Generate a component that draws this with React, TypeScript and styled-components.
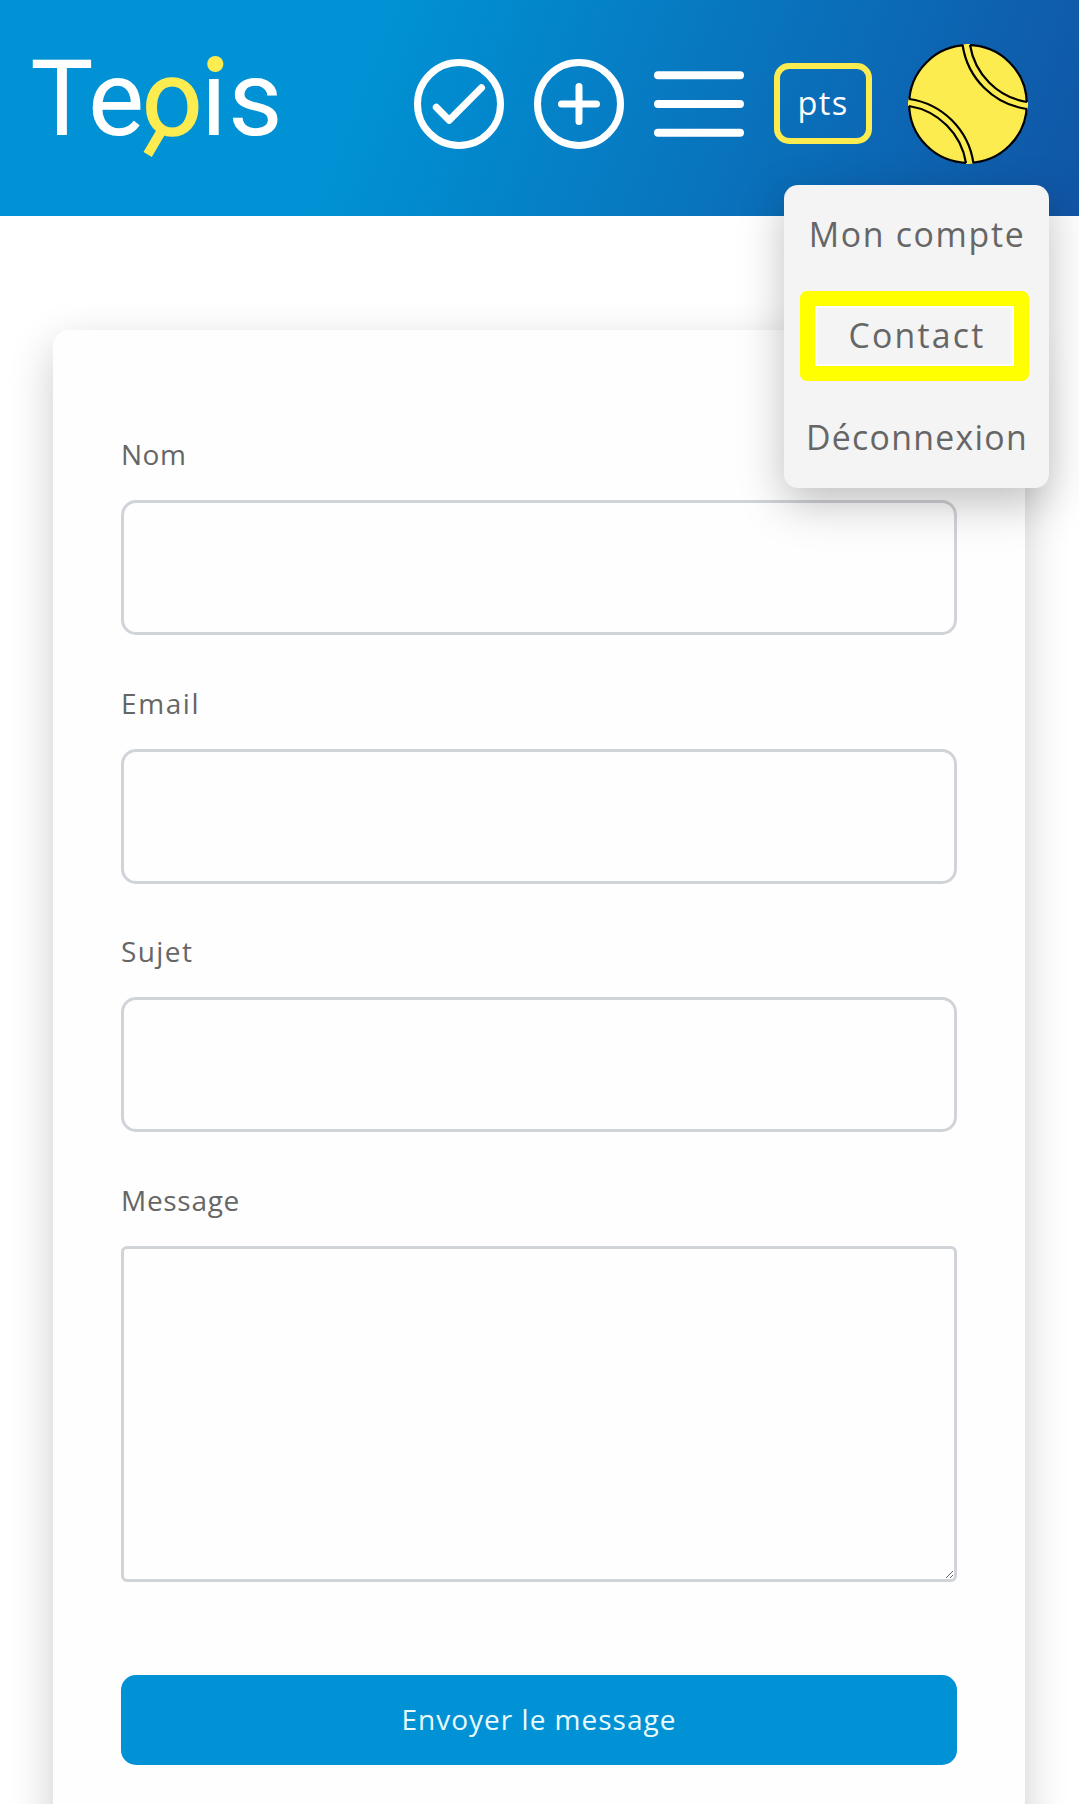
import React from "react";
import styled, { createGlobalStyle } from "styled-components";

const GlobalStyle = createGlobalStyle`
  * { box-sizing: border-box; }
  html, body { margin: 0; padding: 0; background: #fff; overflow: hidden; }
  body { height: 1804px; font-family: "Open Sans", "Noto Sans", sans-serif; color: #666; }
`;

const Page = styled.div`
  height: 1804px;
  overflow: hidden;
`;

const Header = styled.header`
  position: relative;
  height: 216px;
  display: flex;
  align-items: center;
  justify-content: space-between;
  padding: 0 51px 8px 0;
  background: linear-gradient(111deg, #0092d4 0%, #0092d4 34%, #1155a6 100%);
`;

const Logo = styled.svg`
  display: block;
  width: 320px;
  height: 208px;
  font-family: Roboto, sans-serif;
  font-size: 106px;
`;

const Nav = styled.nav`
  display: flex;
  align-items: center;
`;

const IconButton = styled.button`
  display: block;
  width: 90px;
  height: 90px;
  margin: 0 30px 0 0;
  padding: 0;
  border: 0;
  background: none;
  svg { display: block; overflow: visible; }
`;

const Points = styled.div`
  display: flex;
  align-items: center;
  justify-content: center;
  width: 98px;
  height: 81px;
  margin: 0 36px 1px 0;
  padding: 0 0 3px 0;
  border: 6px solid #fcec50;
  border-radius: 15px;
  color: #fff;
  font-size: 32.5px;
  letter-spacing: 1.4px;
`;

const Avatar = styled.svg`
  display: block;
  width: 120px;
  height: 120px;
`;

const Menu = styled.div`
  position: absolute;
  z-index: 2;
  top: 185px;
  right: 30px;
  width: 265px;
  height: 303px;
  display: flex;
  flex-direction: column;
  align-items: center;
  justify-content: space-between;
  padding: 4px 0 6px;
  border-radius: 14px;
  background: #f4f4f4;
  box-shadow: 0 15px 45px rgba(0, 0, 0, 0.25);
`;

const MenuItem = styled.a<{ $spacing: number; $active?: boolean }>`
  display: flex;
  align-items: center;
  justify-content: center;
  width: 229px;
  height: 90px;
  margin-right: ${(p) => (p.$active ? "4px" : "0")};
  padding: ${(p) => (p.$active ? "0 0 2px 5px" : "0 0 1px 1px")};
  border: ${(p) => (p.$active ? "15px solid #ff0" : "0")};
  border-radius: 7px;
  white-space: nowrap;
  font-size: 33.8px;
  letter-spacing: ${(p) => p.$spacing}px;
  box-shadow: ${(p) => (p.$active ? "inset 0 0 0 2px #fcfcfc" : "none")};
`;

const Card = styled.form`
  width: 972px;
  height: 1560px;
  margin: 114px 0 0 53px;
  padding: 103px 68px 0;
  display: flex;
  flex-direction: column;
  border-radius: 16px;
  background: #fefefe;
  box-shadow: 0 15px 45px rgba(0, 0, 0, 0.2);
`;

const Field = styled.div`
  flex: none;
  display: flex;
  flex-direction: column;
  margin-bottom: 46.5px;
`;

const Label = styled.label<{ $spacing: number }>`
  flex: none;
  height: 67px;
  padding: 3px 0 0 0;
  font-size: 28px;
  line-height: 37px;
  letter-spacing: ${(p) => p.$spacing}px;
`;

const Input = styled.input`
  width: 100%;
  height: 135px;
  margin: 0;
  border: 3px solid #d0d3d7;
  border-radius: 15px;
  background: transparent;
`;

const TextArea = styled.textarea`
  flex: none;
  display: block;
  width: 100%;
  height: 336px;
  margin: 0;
  border: 3px solid #d0d3d7;
  border-radius: 6px;
  background: transparent;
  resize: both;
`;

const Submit = styled.button`
  flex: none;
  height: 90px;
  margin: 47px 0 0;
  padding: 0 0 2px;
  border: 0;
  border-radius: 15px;
  background: #0092d4;
  color: #e8fbff;
  font-family: inherit;
  font-size: 28px;
  letter-spacing: 1px;
`;

const fields = [
  { id: "nom", label: "Nom", spacing: 0.5 },
  { id: "email", label: "Email", spacing: 1.6 },
  { id: "sujet", label: "Sujet", spacing: 1.4 },
];

export default function App() {
  return (
    <Page>
      <GlobalStyle />
      <Header>
        <Logo viewBox="0 0 320 208" fill="#fff">
          <text y="134.7" x="30.3 88">Te</text>
          <text y="134.7" x="142" fill="#fcec50" stroke="#fcec50" strokeWidth="1.3">o</text>
          <path d="M157 129L165 134.5L151.8 157L143.5 152Z" fill="#fcec50" />
          <text y="134.7" x="201 228">ıs</text>
          <circle cx="215.3" cy="64" r="8.1" fill="#fcec50" />
        </Logo>
        <Nav>
          <IconButton type="button" aria-label="Valider">
            <svg width="90" height="90" fill="none" stroke="#fff" strokeWidth="7">
              <circle cx="45" cy="45" r="41.5" />
              <path d="M22.3 48.3L35.2 61.2L67.5 28.7" strokeLinecap="round" strokeLinejoin="round" />
            </svg>
          </IconButton>
          <IconButton type="button" aria-label="Ajouter">
            <svg width="90" height="90" fill="none" stroke="#fff" strokeWidth="7">
              <circle cx="45" cy="45" r="41.5" />
              <path d="M27.5 45H62.5M45 27.5V62.5" strokeLinecap="round" />
            </svg>
          </IconButton>
          <IconButton type="button" aria-label="Menu">
            <svg width="90" height="90" fill="none" stroke="#fff" strokeWidth="8" strokeLinecap="round">
              <path d="M4 16.2H86M4 45H86M4 73.8H86" />
            </svg>
          </IconButton>
          <Points>pts</Points>
          <Avatar viewBox="0 0 120 120" fill="none">
            <circle cx="60" cy="60" r="58.8" fill="#fcec50" stroke="#000" strokeWidth="2.2" />
            <path d="M58.3 0A72.5 72.5 0 0 0 120 61.7" stroke="#fcec50" strokeWidth="7" />
            <path d="M54.6 1A75.6 75.6 0 0 0 119 65M62 1A69 69 0 0 0 119 58" stroke="#000" strokeWidth="2.2" />
            <path d="M0 58.3A72.5 72.5 0 0 1 61.7 120" stroke="#fcec50" strokeWidth="7" />
            <path d="M1 55A75.6 75.6 0 0 1 65.4 119M1 62A69 69 0 0 1 58 119" stroke="#000" strokeWidth="2.2" />
          </Avatar>
        </Nav>
        <Menu>
          <MenuItem $spacing={1.7}>Mon compte</MenuItem>
          <MenuItem $spacing={2.2} $active>Contact</MenuItem>
          <MenuItem $spacing={1.3}>Déconnexion</MenuItem>
        </Menu>
      </Header>
      <Card>
        {fields.map((f) => (
          <Field key={f.id}>
            <Label htmlFor={f.id} $spacing={f.spacing}>{f.label}</Label>
            <Input id={f.id} />
          </Field>
        ))}
        <Field>
          <Label htmlFor="message" $spacing={0.7}>Message</Label>
          <TextArea id="message" />
        </Field>
        <Submit type="button">Envoyer le message</Submit>
      </Card>
    </Page>
  );
}
